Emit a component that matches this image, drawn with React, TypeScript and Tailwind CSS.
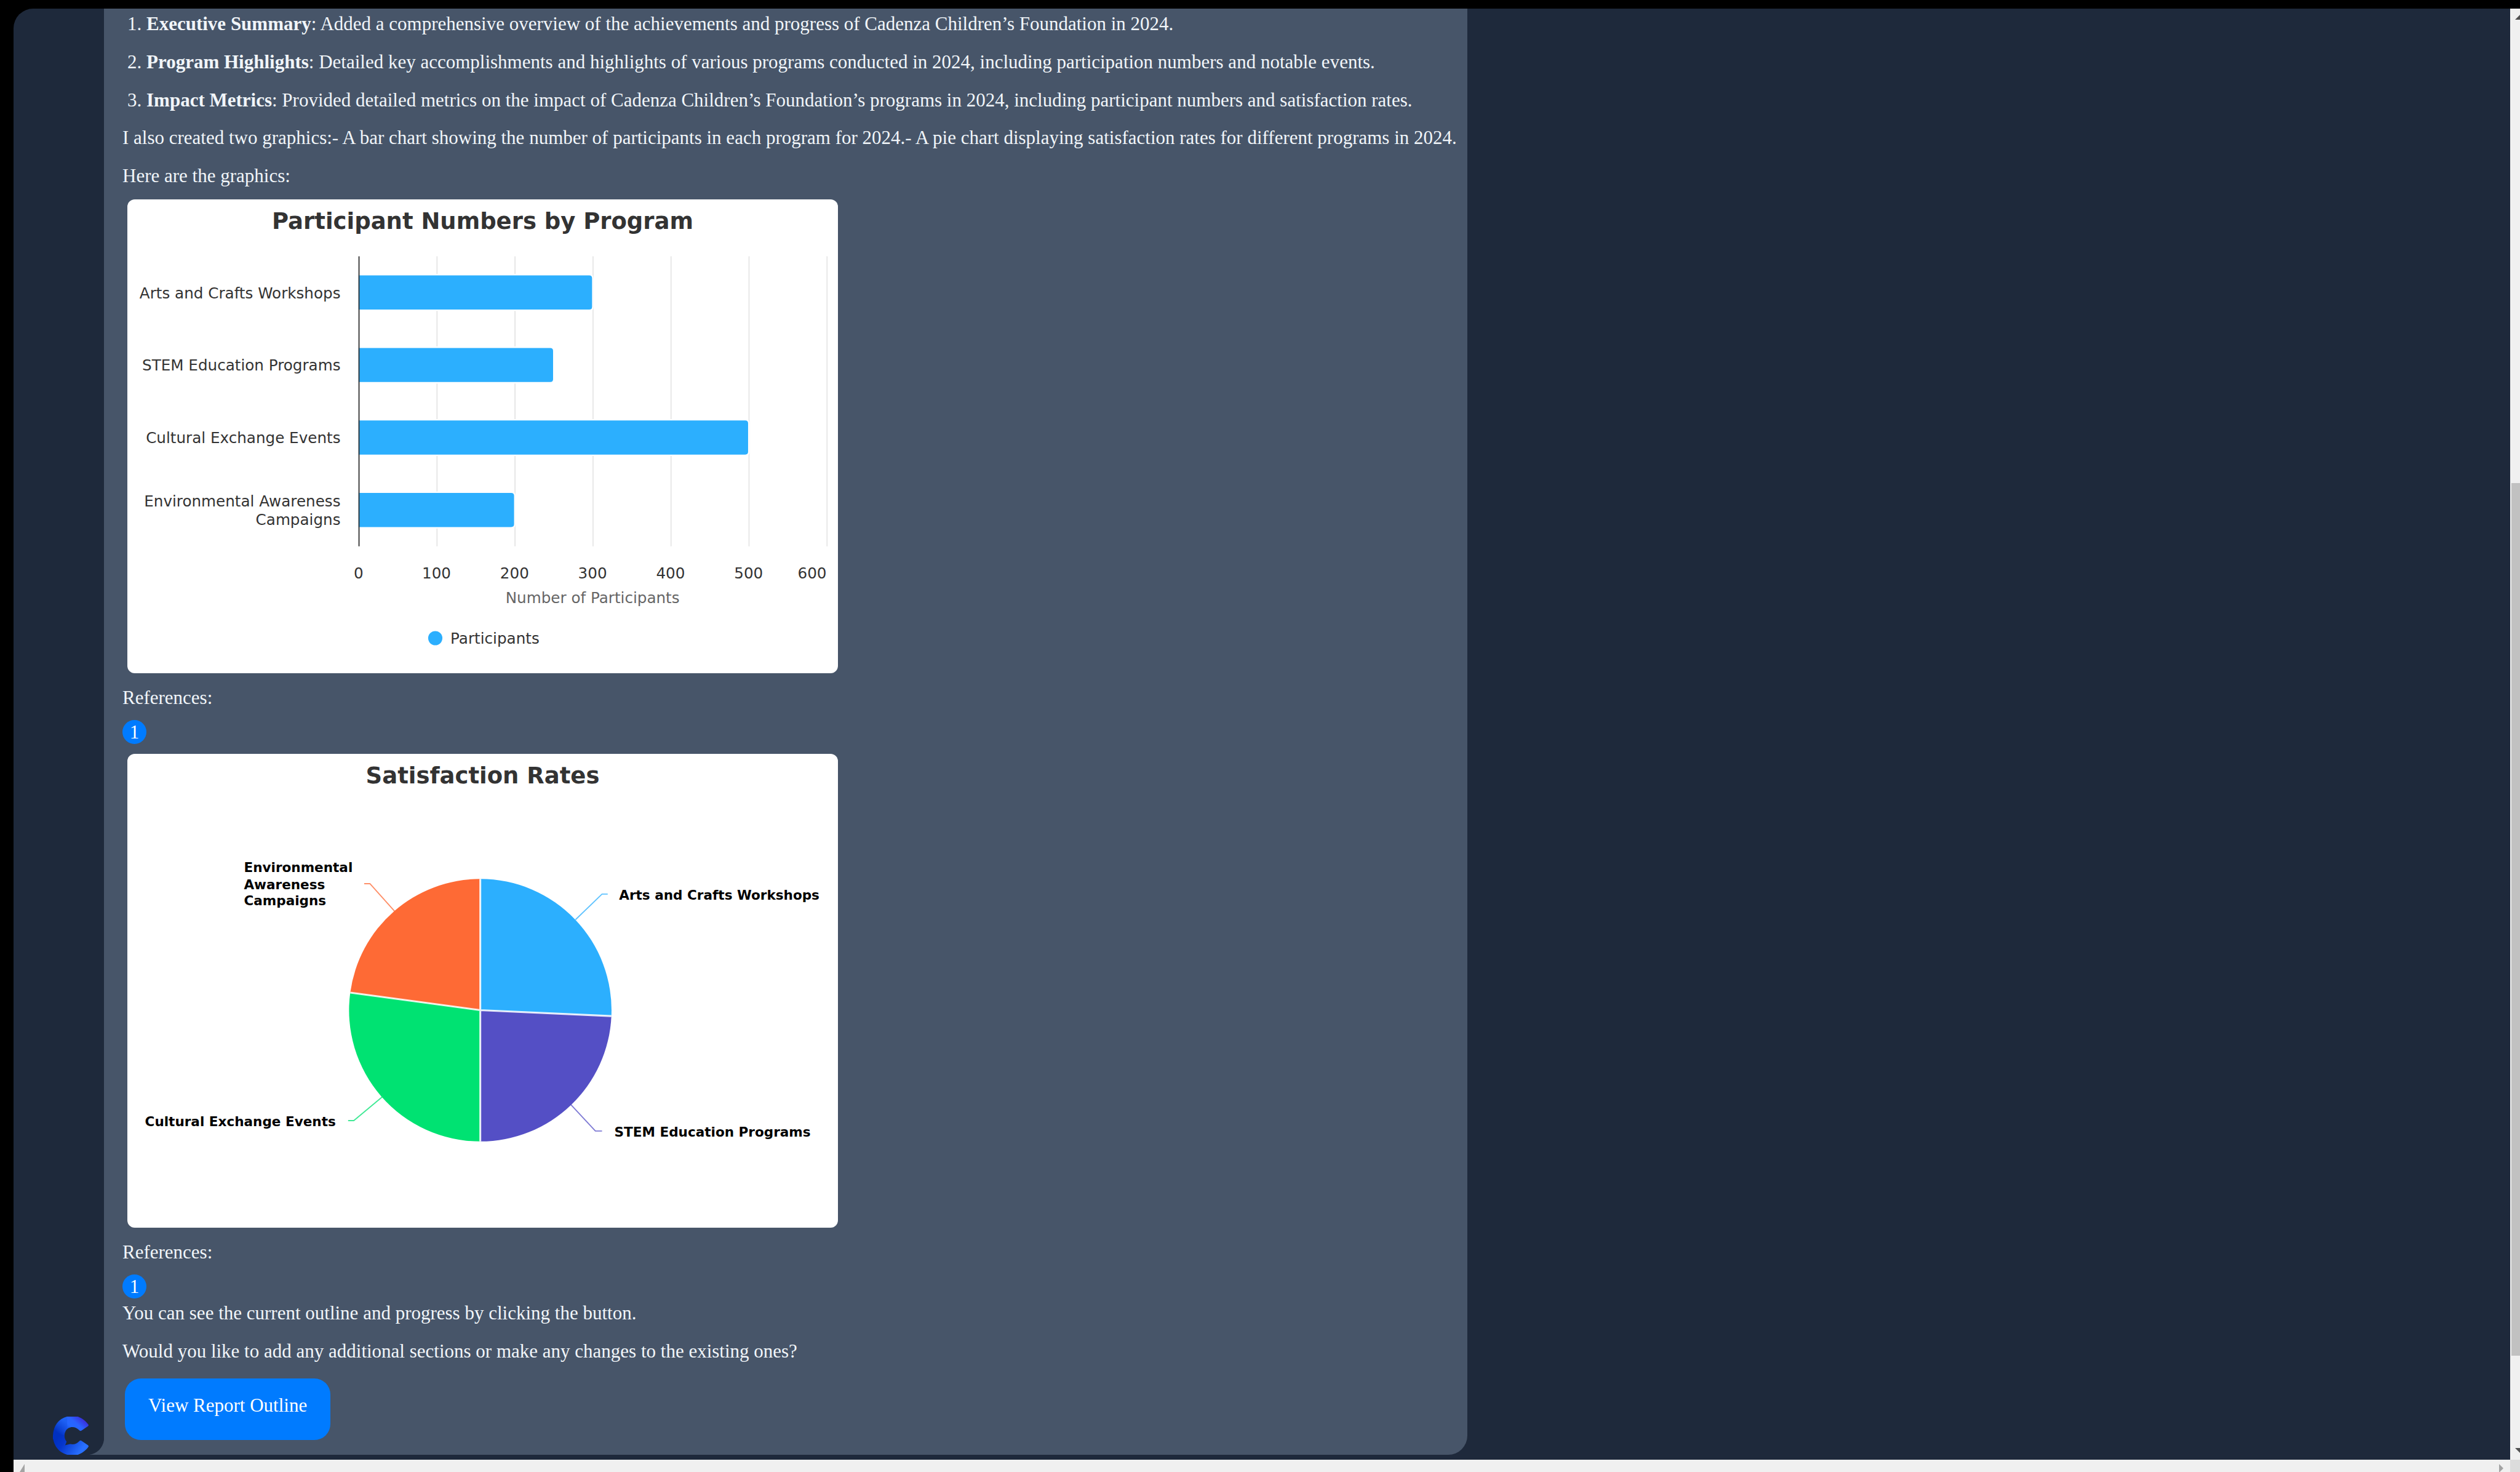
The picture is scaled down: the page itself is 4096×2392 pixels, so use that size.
import React from "react";

const gridLines = [0, 100, 200, 300, 400, 500, 600];
const plotLeft = 244;
const plotTop = 60;
const plotBottom = 366;
const xOf = (v: number) => plotLeft + (v * 494) / 600;

const bars = [
  { name: ["Arts and Crafts Workshops"], value: 300 },
  { name: ["STEM Education Programs"], value: 250 },
  { name: ["Cultural Exchange Events"], value: 500 },
  { name: ["Environmental Awareness", "Campaigns"], value: 200 },
];

const slices = [
  { value: 90, color: "#2caffe", leader: "M473 175 501 148H507" },
  { value: 85, color: "#544fc5", leader: "M468 370 494 398H501" },
  { value: 95, color: "#00e272", leader: "M269 362 239 387H233" },
  { value: 80, color: "#fe6a35", leader: "M282 166 256 137H250" },
];

function ChartCard({ label, children }: { label: string; children: React.ReactNode }) {
  return (
    <svg
      role="img"
      aria-label={label}
      viewBox="0 0 750 500"
      className="ml-2 block h-[770px] w-[1155px] rounded-xl bg-white font-['DejaVu_Sans',sans-serif]"
    >
      {children}
    </svg>
  );
}

function BarChart() {
  const step = (plotBottom - plotTop) / bars.length;
  return (
    <ChartCard label="Participant Numbers by Program">
      <text x="375" y="31" textAnchor="middle" fontSize="24" fontWeight="700" fill="#333333">
        Participant Numbers by Program
      </text>
      {gridLines.slice(1).map((v) => (
        <line key={v} x1={xOf(v) + 0.5} x2={xOf(v) + 0.5} y1={plotTop} y2={plotBottom} stroke="#e6e6e6" strokeWidth="1.2" />
      ))}
      {bars.map((b, i) => {
        const cy = plotTop + step * (i + 0.5);
        const w = xOf(b.value) - plotLeft - 0.5;
        return (
          <g key={b.name[0]}>
            <path
              d={`M${plotLeft} ${cy - 18}h${w - 3}q3 0 3 3v30q0 3 -3 3h${3 - w}z`}
              fill="#2caffe"
              stroke="#ffffff"
              strokeWidth="3"
              paintOrder="stroke"
            />
            {b.name.map((t, k) => (
              <text
                key={t}
                x="225"
                y={cy + 6 + (k - (b.name.length - 1) / 2) * 19}
                textAnchor="end"
                fontSize="16"
                fill="#333333"
              >
                {t}
              </text>
            ))}
          </g>
        );
      })}
      <line x1="244.5" x2="244.5" y1={plotTop} y2={plotBottom} stroke="#333333" strokeWidth="1.2" />
      {gridLines.map((v) => (
        <text
          key={v}
          x={xOf(v)}
          y="400"
          textAnchor={v === 600 ? "end" : "middle"}
          fontSize="16"
          fill="#333333"
        >
          {v}
        </text>
      ))}
      <text x="491" y="426" textAnchor="middle" fontSize="16" fill="#666666">
        Number of Participants
      </text>
      <circle cx="325" cy="463" r="7.5" fill="#2caffe" />
      <text x="341" y="469" fontSize="16" fill="#333333">
        Participants
      </text>
    </ChartCard>
  );
}

function PieChart() {
  const cx = 372.5;
  const cy = 270.5;
  const r = 138.5;
  const total = slices.reduce((s, a) => s + a.value, 0);
  let acc = 0;
  const at = (v: number) => {
    const a = (v / total) * Math.PI * 2;
    return `${cx + r * Math.sin(a)} ${cy - r * Math.cos(a)}`;
  };
  return (
    <ChartCard label="Satisfaction Rates">
      <text x="375" y="31" textAnchor="middle" fontSize="24" fontWeight="700" fill="#333333">
        Satisfaction Rates
      </text>
      {slices.map((s) => {
        const from = at(acc);
        acc += s.value;
        return (
          <g key={s.color}>
            <path d={s.leader} fill="none" stroke={s.color} strokeOpacity="0.75" strokeWidth="1.2" strokeLinejoin="round" />
            <path d={`M${cx} ${cy}L${from}A${r} ${r} 0 0 1 ${at(acc)}Z`} fill={s.color} />
          </g>
        );
      })}
      <path
        d={`M${cx} ${cy}L${at(0)}M${cx} ${cy}L${at(90)}M${cx} ${cy}L${at(175)}M${cx} ${cy}L${at(270)}`}
        stroke="#ffffff"
        strokeOpacity="0.85"
        strokeWidth="2"
      />
      <g fontSize="14" fontWeight="700" fill="#000000">
        <text x="519" y="154">Arts and Crafts Workshops</text>
        <text x="514" y="404">STEM Education Programs</text>
        <text x="220" y="393" textAnchor="end">Cultural Exchange Events</text>
        <text x="123" y="125">Environmental</text>
        <text x="123" y="143">Awareness</text>
        <text x="123" y="160">Campaigns</text>
      </g>
    </ChartCard>
  );
}

function Reference({ n }: { n: number }) {
  return (
    <a
      href="#source"
      className="flex h-[39px] w-[39px] items-center justify-center rounded-full bg-[#007bff] text-white"
    >
      {n}
    </a>
  );
}

function Logo() {
  return (
    <svg viewBox="0 0 60 64" className="h-[62px] w-[58px] shrink-0" aria-label="Cadenza">
      <defs>
        <linearGradient id="upper" x1="0.2" y1="0.8" x2="0.95" y2="0.25">
          <stop offset="0" stopColor="#0030c0" />
          <stop offset="0.5" stopColor="#2468ff" />
          <stop offset="0.72" stopColor="#2a62ff" />
          <stop offset="1" stopColor="#3a2fdc" />
        </linearGradient>
        <linearGradient id="lower" x1="0.1" y1="0.2" x2="0.9" y2="0.5">
          <stop offset="0" stopColor="#0030c0" />
          <stop offset="0.3" stopColor="#0536cc" />
          <stop offset="1" stopColor="#2970ff" />
        </linearGradient>
        <linearGradient id="side" x1="0" y1="0" x2="0" y2="1">
          <stop offset="0" stopColor="#1c66f5" />
          <stop offset="0.6" stopColor="#0030c0" stopOpacity="0" />
        </linearGradient>
      </defs>
      <path
        d="M20 38L0 38C-1 18 8 4 24 0H42C50 3 56 8 60 14Q60 15 59 16L48 23.5Q46 24.5 44.5 23C37 15 26 16 21.5 24Q18 30 20 38Z"
        fill="url(#upper)"
      />
      <path
        d="M0 31H19.5Q19 37 23 42L20.5 48L29 46Q38 48 44.5 41Q46 39.5 48 40.5L59 48Q60 49 60 50C56 56 50 61 42 64H24C9 60 0 47 0 31Z"
        fill="url(#lower)"
      />
      <path d="M0 32C0 16 9 4 24 0L24 20Q19 25 19.5 33L0 40Z" fill="url(#side)" opacity="0.6" />
    </svg>
  );
}

export default function App() {
  return (
    <div className="flex h-screen flex-col overflow-hidden bg-black pl-[22px] pt-[14px] font-['Liberation_Serif',serif] text-[31px] leading-[36px] text-slate-100">
      <div className="flex min-h-0 flex-1">
        <main className="flex min-w-0 flex-1 items-end overflow-hidden rounded-tl-[32px] bg-[#1e293b] pb-2 pl-[64px]">
          <Logo />
          <svg viewBox="0 0 24 24" className="ml-px h-6 w-6 shrink-0" aria-hidden="true">
            <path d="M24 0C22 13 13 22 0 24H24Z" fill="#475569" />
          </svg>
          <article className="flex h-full flex-col rounded-br-[31px] bg-[#475569] pl-[30px] pr-[17px] pt-[7px]">
            <ol className="list-none pl-2">
              <li className="mb-[26px]">
                1. <strong>Executive Summary</strong>: Added a comprehensive overview of the achievements and progress
                of Cadenza Children’s Foundation in 2024.
              </li>
              <li className="mb-[26px]">
                2. <strong>Program Highlights</strong>: Detailed key accomplishments and highlights of various programs
                conducted in 2024, including participation numbers and notable events.
              </li>
              <li className="mb-[25px]">
                3. <strong>Impact Metrics</strong>: Provided detailed metrics on the impact of Cadenza Children’s
                Foundation’s programs in 2024, including participant numbers and satisfaction rates.
              </li>
            </ol>
            <p className="mb-[26px] whitespace-nowrap">
              I also created two graphics:- A bar chart showing the number of participants in each program for 2024.- A
              pie chart displaying satisfaction rates for different programs in 2024.
            </p>
            <p className="mb-[20px]">Here are the graphics:</p>
            <BarChart />
            <p className="mb-[18px] mt-[22px]">References:</p>
            <Reference n={1} />
            <div className="mt-4">
              <PieChart />
            </div>
            <p className="mb-[18px] mt-[22px]">References:</p>
            <Reference n={1} />
            <p className="mb-[26px] mt-[6px]">You can see the current outline and progress by clicking the button.</p>
            <p className="mb-[26px]">Would you like to add any additional sections or make any changes to the existing ones?</p>
            <button
              type="button"
              className="ml-1 h-[100px] self-start rounded-[26px] bg-[#007bff] px-[38px] pb-[12px] text-white"
            >
              View Report Outline
            </button>
          </article>
        </main>
        <div className="flex w-4 flex-col overflow-hidden bg-[#f0f0f0]" aria-hidden="true">
          <svg viewBox="0 0 16 18" className="h-[18px] w-4">
            <path d="M8 18H24L16 10Z" fill="#505050" />
          </svg>
          <div className="ml-[2px] mt-[753px] h-[1418px] bg-[#c1c1c1]" />
          <div className="flex-1" />
          <svg viewBox="0 0 16 20" className="h-5 w-4">
            <path d="M8 1H24L16 9Z" fill="#505050" />
          </svg>
        </div>
      </div>
      <div className="flex h-5 items-end justify-between bg-[#f0f0f0]" aria-hidden="true">
        <svg viewBox="0 0 20 13" className="h-[13px] w-5">
          <path d="M18 0V26L10 13Z" fill="#a3a3a3" />
        </svg>
        <div className="flex items-end">
          <svg viewBox="0 0 20 13" className="h-[13px] w-5">
            <path d="M2 0L9 7L2 14Z" fill="#a3a3a3" />
          </svg>
          <div className="h-5 w-4 bg-[#dcdcdc]" />
        </div>
      </div>
    </div>
  );
}
